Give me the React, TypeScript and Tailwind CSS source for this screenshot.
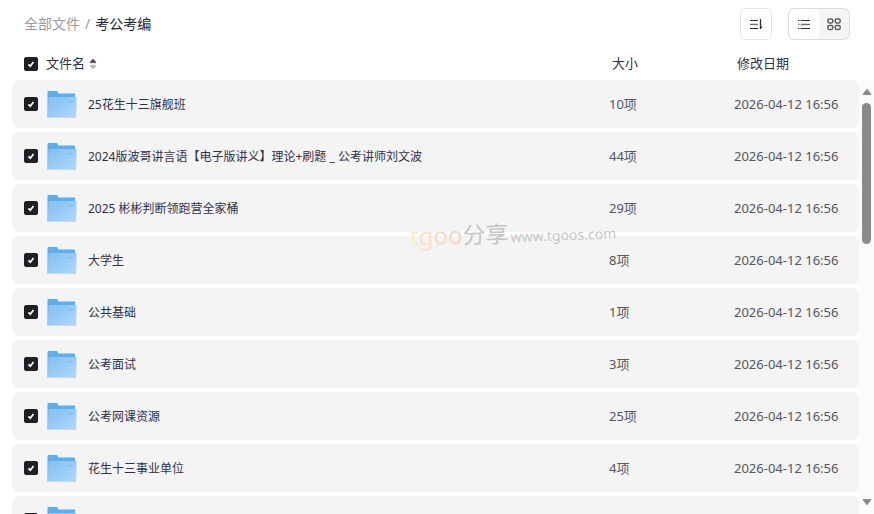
import { useState } from 'react';

interface FileItem {
  name: string;
  size: string;
  date: string;
}

const files: FileItem[] = [
  { name: '25花生十三旗舰班', size: '10项', date: '2026-04-12 16:56' },
  { name: '2024版波哥讲言语【电子版讲义】理论+刷题 _ 公考讲师刘文波', size: '44项', date: '2026-04-12 16:56' },
  { name: '2025 彬彬判断领跑营全家桶', size: '29项', date: '2026-04-12 16:56' },
  { name: '大学生', size: '8项', date: '2026-04-12 16:56' },
  { name: '公共基础', size: '1项', date: '2026-04-12 16:56' },
  { name: '公考面试', size: '3项', date: '2026-04-12 16:56' },
  { name: '公考网课资源', size: '25项', date: '2026-04-12 16:56' },
  { name: '花生十三事业单位', size: '4项', date: '2026-04-12 16:56' },
  { name: '', size: '', date: '' },
];

interface CheckboxProps {
  id: string;
  checked: boolean;
  onChange: () => void;
}

function Checkbox({ id, checked, onChange }: CheckboxProps) {
  return (
    <span className="relative block size-3.5">
      <input
        id={id}
        type="checkbox"
        checked={checked}
        onChange={onChange}
        className="block size-3.5 appearance-none rounded-xs border border-[#1f2026] bg-white checked:bg-[#1f2026]"
      />
      {checked && (
        <svg viewBox="0 0 14 14" className="pointer-events-none absolute inset-0 size-3.5" fill="none">
          <path d="M4.4 7.3 6.3 9.2 9.5 4.9" stroke="#fff" strokeWidth="1.7" />
        </svg>
      )}
    </span>
  );
}

function FolderIcon() {
  return (
    <svg viewBox="-1 -2 32 30" className="h-[30px] w-8 shrink-0">
      <defs>
        <linearGradient id="folder-front" x1="0" y1="0" x2="1" y2="1">
          <stop offset="0" stopColor="#83bff3" />
          <stop offset="0.5" stopColor="#98cbf7" />
          <stop offset="1" stopColor="#b3dafb" />
        </linearGradient>
      </defs>
      <path d="M1.5 0h8c.5 0 .9.3 1.1.7l.8 1.8h15.6c.6 0 1 .4 1 1V26H0.5V1c0-.6.4-1 1-1z" fill="#5eadea" />
      <path d="M2.6 6h26c.6 0 1 .4 1 1l-.4 19c0 .6-.4 1-1 1H1.4c-.6 0-1-.4-1-1L1.6 7c0-.6.4-1 1-1z" fill="url(#folder-front)" />
      <path d="M1 26.6h27.6" stroke="#bfdffb" strokeWidth="0.9" />
      <path d="M22.3 10.9h3.2" stroke="#7cb9ec" strokeWidth="1.6" />
    </svg>
  );
}

function Toolbar() {
  return (
    <div className="flex gap-4">
      <button
        type="button"
        aria-label="排序"
        className="flex size-8 items-center justify-center rounded-md border border-[#e3e3e5] bg-white"
      >
        <svg viewBox="0 0 16 16" className="size-4" fill="none" stroke="#303036" strokeWidth="1.1">
          <path d="M2 4.5h8M2 12.5h8" />
          <path d="M2 8.5h8" stroke="#77777b" strokeWidth="1.5" />
          <path d="M12.5 3v10" strokeWidth="1.3" />
          <path d="M12.4 13.2V10.4h2.4z" fill="#303036" stroke="none" />
        </svg>
      </button>
      <div className="flex h-8 overflow-hidden rounded-md border border-[#dcdcde] bg-[#f4f4f4]">
        <button
          type="button"
          aria-label="列表"
          className="flex w-[30px] items-center justify-center rounded-md bg-white"
        >
          <svg viewBox="0 0 16 16" className="size-4" fill="none" stroke="#303036" strokeWidth="1.1">
            <path d="M2 4.5h1.4M2 12.5h1.4M4.6 4.5h9.4M4.6 12.5h9.4" />
            <path d="M2 8.5h1.4M4.6 8.5h9.4" stroke="#77777b" strokeWidth="1.5" />
          </svg>
        </button>
        <button type="button" aria-label="网格" className="flex w-[30px] items-center justify-center">
          <svg viewBox="0 0 16 16" className="size-4" fill="none" stroke="#606066" strokeWidth="1.5">
            <rect x="1.8" y="3" width="5" height="4" rx="1.4" />
            <rect x="9.2" y="3" width="5" height="4" rx="1.4" />
            <rect x="1.8" y="9.5" width="5" height="4" rx="1.4" />
            <rect x="9.2" y="9.5" width="5" height="4" rx="1.4" />
          </svg>
        </button>
      </div>
    </div>
  );
}

function Scrollbar() {
  return (
    <div className="mt-8 flex w-[15px] shrink-0 flex-col items-center bg-[#fbfbfb] pt-2 pb-2">
      <svg viewBox="0 0 10 8" className="h-2 w-2.5 shrink-0">
        <path d="M5 1.2 9 6.5H1z" fill="#8a8a8a" stroke="#8a8a8a" strokeLinejoin="round" />
      </svg>
      <div className="mt-[7px] h-[141px] w-[9px] rounded-full bg-[#8a8a8a]" />
      <svg viewBox="0 0 10 8" className="mt-auto h-2 w-2.5 shrink-0">
        <path d="M5 6.8 9 1.5H1z" fill="#8a8a8a" stroke="#8a8a8a" strokeLinejoin="round" />
      </svg>
    </div>
  );
}

function Watermark() {
  return (
    <div className="pointer-events-none absolute top-[216px] left-[410px] flex -rotate-2 items-baseline whitespace-nowrap text-[#c6c6c6]">
      <span className="text-2xl">
        <span className="text-[#faedc4]">t</span>
        <span className="text-[#fae0c6]">g</span>
        <span className="text-[#fad9cc]">o</span>
        <span className="text-[#fad2d0]">o</span>
      </span>
      <span className="text-[23px]">分享</span>
      <span className="ml-0.5 text-sm">www.tgoos.com</span>
    </div>
  );
}

function App() {
  const [selected, setSelected] = useState<boolean[]>(files.map(() => true));
  const allSelected = selected.every(Boolean);

  const toggle = (index: number) => {
    setSelected(selected.map((value, i) => (i === index ? !value : value)));
  };

  return (
    <div className="relative flex h-screen flex-col overflow-hidden bg-white font-['Noto_Sans','Noto_Sans_CJK_SC',sans-serif] text-[#30304a]">
      <header className="flex h-12 shrink-0 items-center justify-between pr-6 pl-6">
        <nav className="flex items-center gap-[5px] text-sm">
          <a href="#" className="text-[#9a9a9f]">全部文件</a>
          <span className="text-[#9a9a9f]">/</span>
          <span className="text-[#25252f]">考公考编</span>
        </nav>
        <Toolbar />
      </header>

      <main className="flex min-h-0 flex-1 pl-3">
        <div className="min-w-0 flex-1 overflow-hidden">
          <table className="w-full table-fixed border-separate border-spacing-x-0 border-spacing-y-1">
            <thead>
              <tr className="h-6 text-left text-[13px]">
                <th className="w-[34px] p-0 pl-3">
                  <Checkbox
                    id="select-all"
                    checked={allSelected}
                    onChange={() => setSelected(files.map(() => !allSelected))}
                  />
                </th>
                <th className="p-0 font-normal">
                  <div className="flex items-center gap-1">
                    <label htmlFor="select-all">文件名</label>
                    <svg viewBox="0 0 8 12" className="h-3 w-2">
                      <path d="M4 1 6.8 3.8v1H1.2v-1z" fill="#4c4c52" stroke="#4c4c52" strokeWidth="0.5" />
                      <path d="M4 11 6.8 8.2v-1H1.2v1z" fill="#b5b5b8" stroke="#b5b5b8" strokeWidth="0.5" />
                    </svg>
                  </div>
                </th>
                <th className="w-[125px] p-0 pl-[3px] font-normal">大小</th>
                <th className="w-[125px] p-0 pl-[3px] font-normal">修改日期</th>
              </tr>
            </thead>
            <tbody>
              {files.map((file, index) => (
                <tr key={index} className="h-12">
                  <td className="rounded-l-md bg-[#f4f4f4] p-0 pl-3">
                    <Checkbox id={`file-${index}`} checked={selected[index]} onChange={() => toggle(index)} />
                  </td>
                  <td className="bg-[#f4f4f4] p-0">
                    <div className="flex items-center gap-2.5">
                      <FolderIcon />
                      <label htmlFor={`file-${index}`} className="truncate pt-0.5 text-xs">{file.name}</label>
                    </div>
                  </td>
                  <td className="bg-[#f4f4f4] p-0 pt-0.5 text-[13px] text-[#55555b]">{file.size}</td>
                  <td className="rounded-r-md bg-[#f4f4f4] p-0 pt-0.5 text-[13px] text-[#55555b]">{file.date}</td>
                </tr>
              ))}
            </tbody>
          </table>
        </div>
        <Scrollbar />
      </main>

      <Watermark />
    </div>
  );
}

export default App;
